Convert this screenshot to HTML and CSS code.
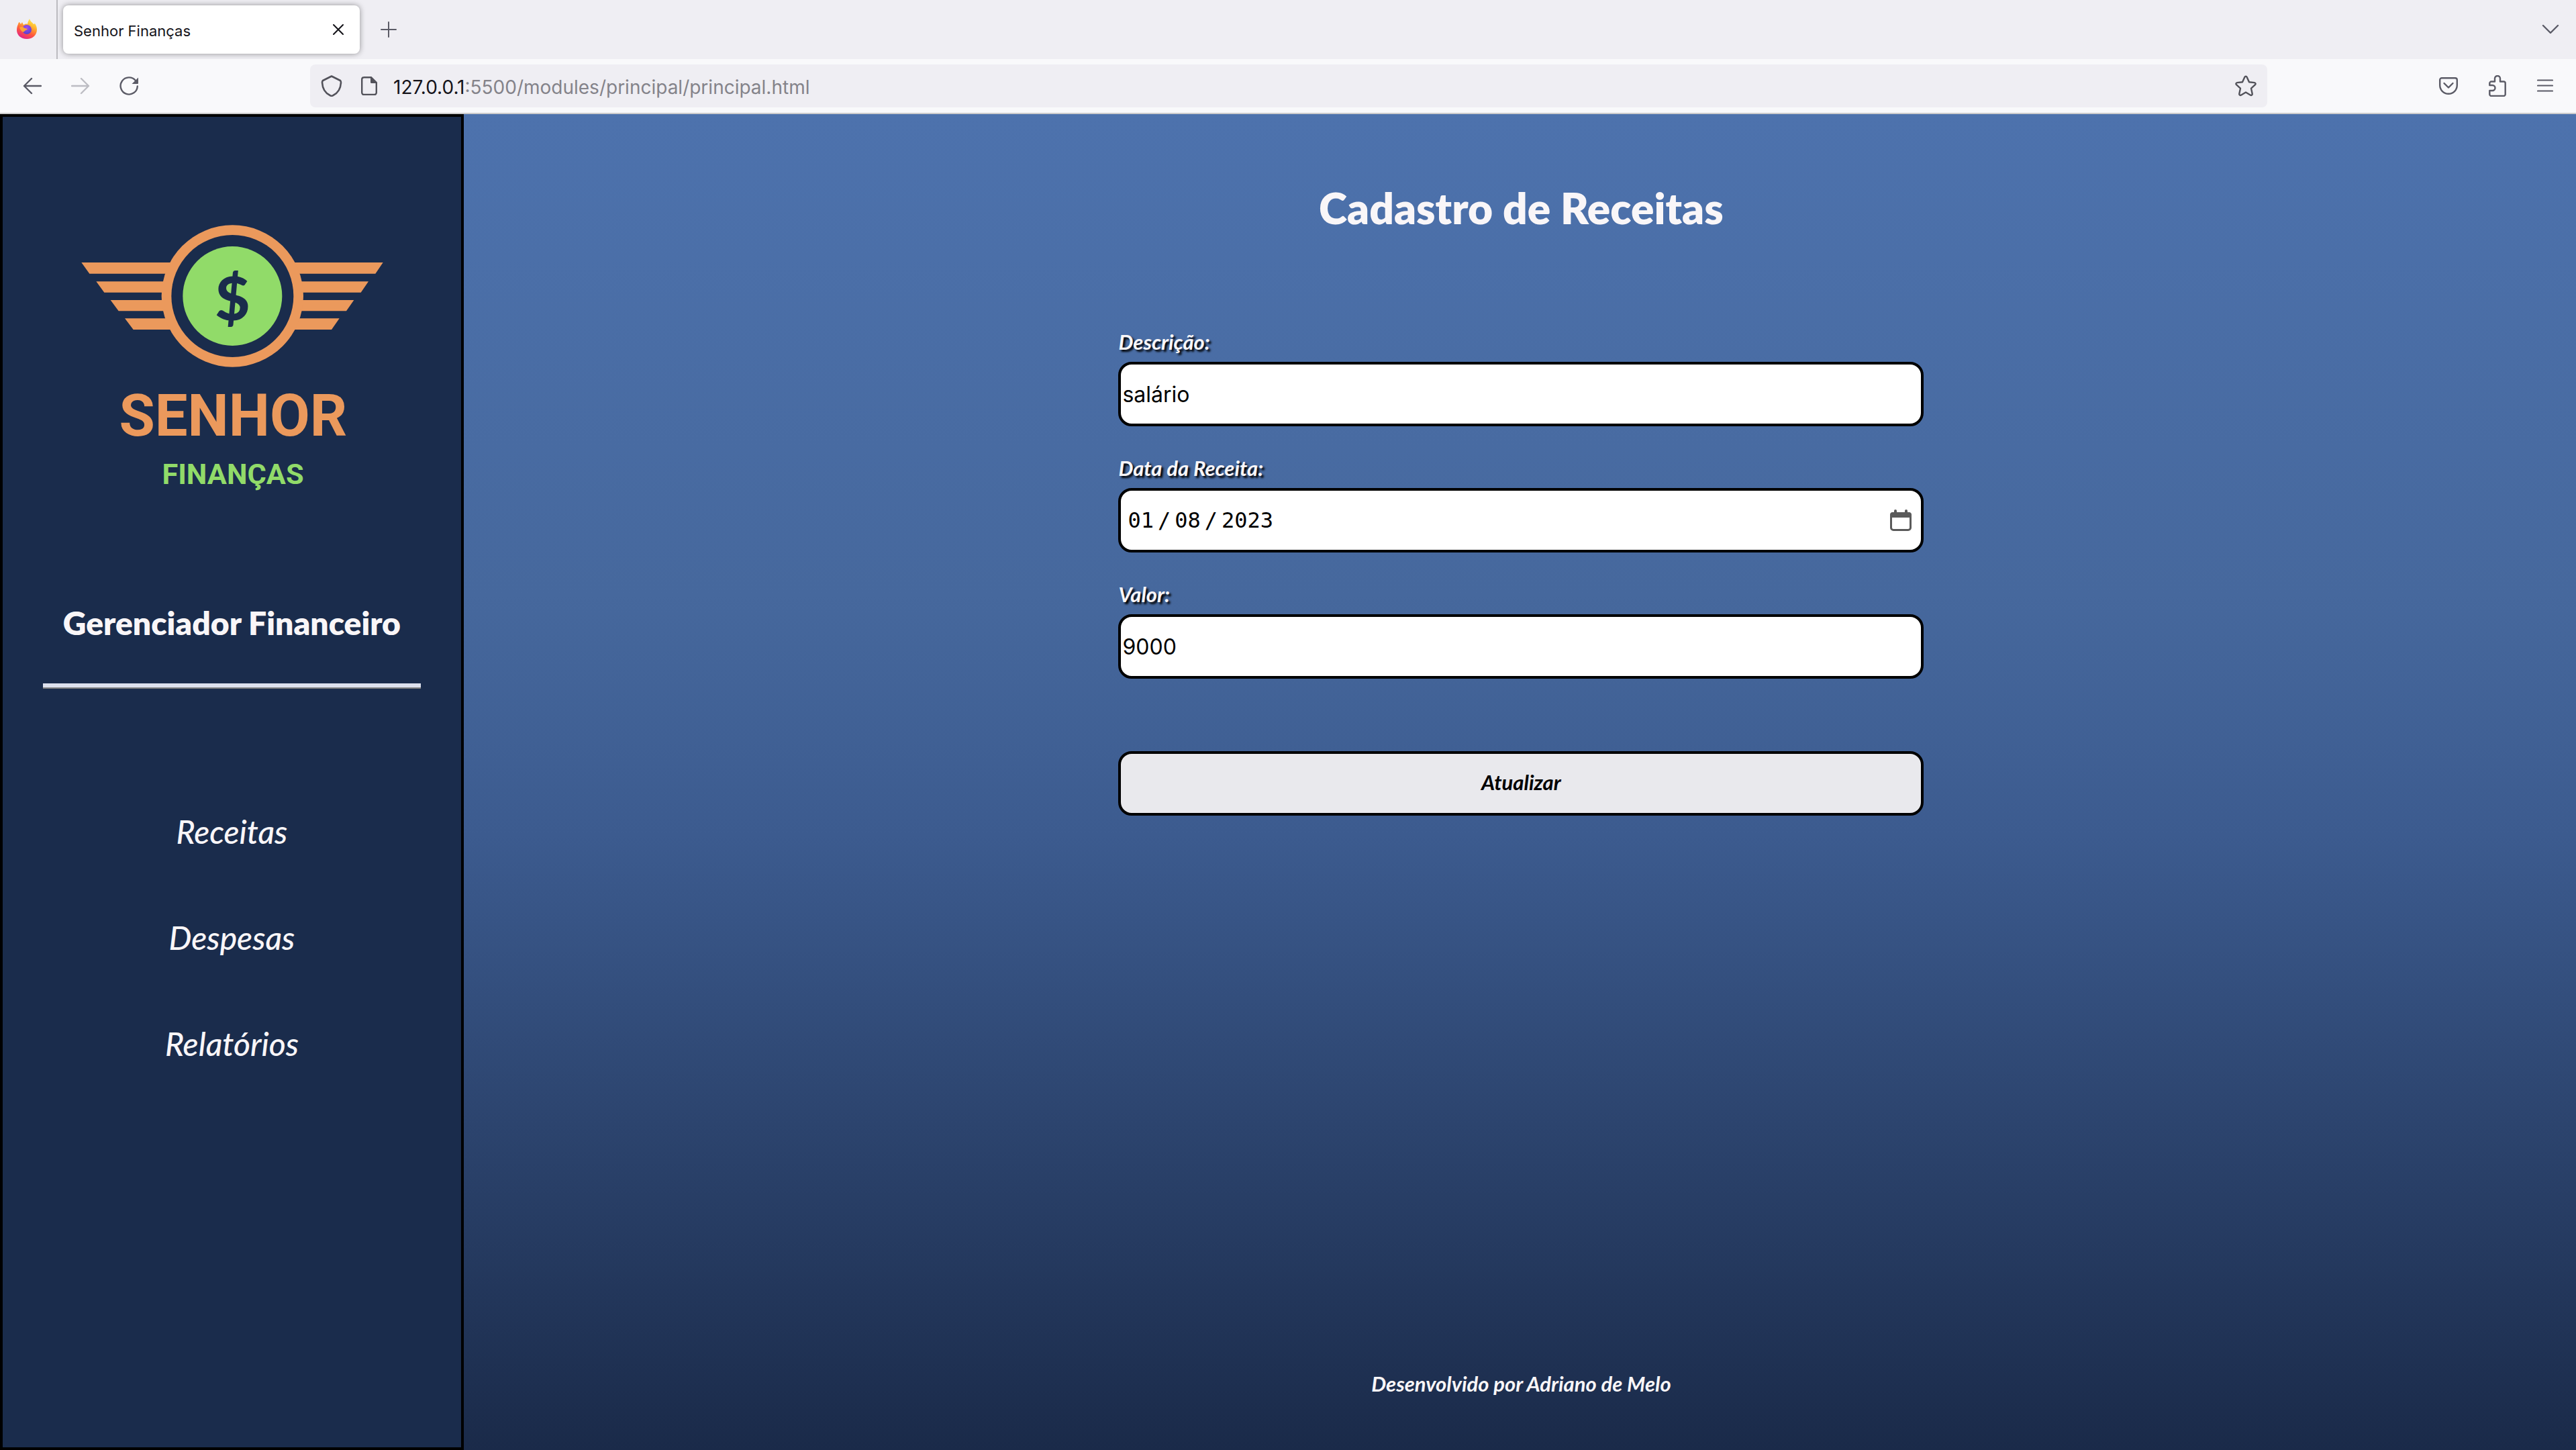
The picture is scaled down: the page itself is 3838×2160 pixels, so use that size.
FILE: index.html
```html
<!DOCTYPE html>
<html lang="pt-BR">
<head>
<meta charset="utf-8">
<meta name="viewport" content="width=device-width, initial-scale=1">
<title>Senhor Finanças</title>
<link rel="stylesheet" href="styles.css">
</head>
<body>
<header class="browser">
  <div class="tabs">
    <div class="tabs-home">
      <svg width="32" height="32" viewBox="0 0 32 32" aria-hidden="true">
        <defs>
          <linearGradient id="flame" x1="0.8" y1="0" x2="0.3" y2="1">
            <stop offset="0" stop-color="#fff44f"/><stop offset="0.35" stop-color="#ffb02e"/><stop offset="0.65" stop-color="#ff5a3c"/><stop offset="1" stop-color="#e0218a"/>
          </linearGradient>
          <radialGradient id="globe" cx="0.5" cy="0.3" r="0.8">
            <stop offset="0" stop-color="#a04bf0"/><stop offset="1" stop-color="#4a3fc8"/>
          </radialGradient>
        </defs>
        <path fill="url(#flame)" d="M3 8c0-1 1-3 2-3l2 3 2-3 2 4c2-1 4-2 6-1 0-3 2-6 3-8 1 4 4 5 6 8l2-1c2 3 3 6 3 9 0 8-6 14-15 14S1 24 1 17c0-4 1-7 2-9z"/>
        <circle cx="16" cy="16" r="7" fill="url(#globe)"/>
        <path fill="#ffa436" d="M5 13c3-2 6-1 8 1l4 1c-1 2-4 2-5 4-2 2-5-1-7-6z"/>
      </svg>
    </div>
    <div class="tab">
      <span>Senhor Finanças</span>
      <button class="icon-btn" type="button" aria-label="Fechar aba">
        <svg width="16" height="16" viewBox="0 0 16 16"><path d="M1 1l14 14M15 1L1 15" fill="none" stroke="#15141a" stroke-width="2" stroke-linecap="round"/></svg>
      </button>
    </div>
    <button class="icon-btn new-tab" type="button" aria-label="Nova aba">
      <svg width="24" height="24" viewBox="0 0 24 24"><path d="M12 1v22M1 12h22" fill="none" stroke="#5b5b66" stroke-width="2" stroke-linecap="round"/></svg>
    </button>
    <button class="icon-btn tab-list" type="button" aria-label="Listar abas">
      <svg width="26" height="16" viewBox="0 0 26 16"><path d="M2 2l11 11L24 2" fill="none" stroke="#5b5b66" stroke-width="2.4" stroke-linecap="round" stroke-linejoin="round"/></svg>
    </button>
  </div>
  <div class="toolbar">
    <div class="nav-buttons">
      <button class="icon-btn" type="button" aria-label="Voltar">
        <svg width="28" height="28" viewBox="0 0 28 28"><path d="M27 14H2M13 3L2 14l11 11" fill="none" stroke="#5b5b66" stroke-width="2.4" stroke-linecap="round" stroke-linejoin="round"/></svg>
      </button>
      <button class="icon-btn" type="button" aria-label="Avançar">
        <svg width="28" height="28" viewBox="0 0 28 28"><path d="M1 14h25M15 3l11 11-11 11" fill="none" stroke="#bdbdc3" stroke-width="2.4" stroke-linecap="round" stroke-linejoin="round"/></svg>
      </button>
      <button class="icon-btn" type="button" aria-label="Recarregar">
        <svg width="28" height="28" viewBox="0 0 28 28"><path d="M24 6A12.600 12.600 0 1 0 26.800 14.500" fill="none" stroke="#5b5b66" stroke-width="2.400" stroke-linecap="round"/><path d="M28 1.500V10a1 1 0 0 1-1 1h-8.500z" fill="#5b5b66"/></svg>
      </button>
    </div>
    <div class="address">
      <svg width="32" height="32" viewBox="0 0 32 32" aria-hidden="true"><path d="M16 1.500L29 8c1 1 1 2 1 3-.5 9-5 16-12 19.300q-2 1-4 0C7 27 2.500 20 2 11c0-1 0-2 1-3z" fill="none" stroke="#52525a" stroke-width="2.600" stroke-linejoin="round"/></svg>
      <svg width="24" height="28" viewBox="0 0 24 28" aria-hidden="true"><path d="M4 1.200h11L22.800 9v15a3 3 0 0 1-3 3H4.200a3 3 0 0 1-3-3V4a3 3 0 0 1 3-2.800z" fill="none" stroke="#52525a" stroke-width="2.400"/><path d="M14 1l9 9h-7.500a1.500 1.500 0 0 1-1.500-1.500z" fill="#52525a"/></svg>
      <p class="url"><strong>127.0.0.1</strong>:5500/modules/principal/principal.html</p>
      <button class="icon-btn" type="button" aria-label="Favoritar">
        <svg width="32" height="32" viewBox="0 0 32 32"><path d="M14.400 2.800a1.800 1.800 0 0 1 3.200 0l3.400 7.400 8 .9a1.800 1.800 0 0 1 1 3.100l-6 5.400 1.700 8.200a1.800 1.800 0 0 1-2.600 1.900L16 25.500l-7.100 4.200a1.800 1.800 0 0 1-2.600-1.900L8 19.600l-6-5.400a1.800 1.800 0 0 1 1-3.100l8-.9z" fill="none" stroke="#52525a" stroke-width="2.400" stroke-linejoin="round"/></svg>
      </button>
    </div>
    <div class="tools">
      <button class="icon-btn" type="button" aria-label="Pocket">
        <svg width="28" height="28" viewBox="0 0 28 28"><path d="M4 2.200h20a2.800 2.800 0 0 1 2.800 2.800v8a12.800 12.800 0 0 1-25.600 0V5A2.800 2.800 0 0 1 4 2.200zM7.500 10l6.500 6.500 6.500-6.500" fill="none" stroke="#5b5b66" stroke-width="2.400" stroke-linecap="round" stroke-linejoin="round"/></svg>
      </button>
      <button class="icon-btn" type="button" aria-label="Extensões">
        <svg width="26" height="32" viewBox="0 0 26 32"><path d="M1.300 15V12a2.500 2.500 0 0 1 2.500-2.500h5.200V5a4 4 0 0 1 8 0v4.500h5.200a2.500 2.500 0 0 1 2.500 2.500v16.500a2.500 2.500 0 0 1-2.500 2.500H3.800a2.500 2.500 0 0 1-2.500-2.500V23H5.500a4 4 0 0 0 0-8z" fill="none" stroke="#5b5b66" stroke-width="2.400" stroke-linejoin="round"/></svg>
      </button>
      <button class="icon-btn" type="button" aria-label="Menu">
        <svg width="24" height="24" viewBox="0 0 24 24"><path d="M1 3.500h22M1 11.500h22M1 19.500h22" fill="none" stroke="#5b5b66" stroke-width="2.200" stroke-linecap="round"/></svg>
      </button>
    </div>
  </div>
</header>
<div class="app">
  <aside class="sidebar">
    <svg class="logo" viewBox="-13 0 1500 1320" role="img" aria-label="Senhor Finanças">
      <g fill="#eb995c">
        <path d="M66 243H500V293H102zM132 328H500V377H168zM196 411H500V460H232zM260 493H500V543H298z"/>
        <path d="M1414 243H980V293H1380zM1349 328H980V377H1315zM1284 411H980V460H1250zM1219 493H980V543H1184z"/>
        <circle cx="741" cy="393" r="317"/>
      </g>
      <circle cx="741" cy="393" r="273" fill="#1a2c4c"/>
      <circle cx="741" cy="393" r="222" fill="#91db69"/>
      <text class="logo-coin" x="741" y="500">$</text>
      <text class="logo-name" x="744" y="1018">SENHOR</text>
      <text class="logo-sub" x="743" y="1232">FINANÇAS</text>
    </svg>
    <h2 class="sidebar-title">Gerenciador Financeiro</h2>
    <hr class="divider">
    <nav class="menu">
      <a href="#receitas">Receitas</a>
      <a href="#despesas">Despesas</a>
      <a href="#relatorios">Relatórios</a>
    </nav>
  </aside>
  <main class="content">
    <h1 class="page-title">Cadastro de Receitas</h1>
    <form class="form">
      <div class="field">
        <label for="descricao">Descrição:</label>
        <input class="control" id="descricao" type="text" value="salário">
      </div>
      <div class="field">
        <label for="data">Data da Receita:</label>
        <input class="control control-date" id="data" type="date" value="2023-01-08">
      </div>
      <div class="field">
        <label for="valor">Valor:</label>
        <input class="control" id="valor" type="text" inputmode="decimal" value="9000">
      </div>
      <button class="submit" type="submit">Atualizar</button>
    </form>
    <footer class="footer">Desenvolvido por Adriano de Melo</footer>
  </main>
</div>
</body>
</html>
```
FILE: styles.css
```css
* {
  box-sizing: border-box;
}

body {
  margin: 0;
  min-height: 100vh;
  display: flex;
  flex-direction: column;
  font-family: "Lato", sans-serif;
  color: #f9f6f8;
}

h1, h2, p {
  margin: 0;
}

svg {
  display: block;
  flex: none;
}

.icon-btn {
  padding: 0;
  border: 0;
  background: none;
}

/* Browser bars */
.browser {
  font-family: "Inter", sans-serif;
  background: #f9f9fb;
  border-bottom: 2px solid #cccccc;
}

.tabs {
  display: flex;
  align-items: center;
  height: 88px;
  background: #efeef3;
}

.tabs-home {
  display: flex;
  align-items: center;
  align-self: stretch;
  width: 86px;
  padding-left: 24px;
  border-right: 2px solid #bcbbc0;
}

.tab {
  display: flex;
  align-items: center;
  justify-content: space-between;
  width: 442px;
  height: 72px;
  margin-left: 8px;
  padding: 0 24px 0 16px;
  border-radius: 8px;
  background: #ffffff;
  box-shadow: 0 0 8px rgba(0, 0, 0, 0.4);
  color: #15141a;
  font-size: 22px;
}

.tab span,
.url {
  padding-top: 3px;
}

.new-tab {
  margin-left: 31px;
}

.tab-list {
  margin-left: auto;
  margin-right: 25px;
}

.toolbar {
  display: flex;
  align-items: center;
  height: 80px;
  padding: 0 34px;
}

.nav-buttons {
  display: flex;
  gap: 44px;
}

.address {
  display: flex;
  align-items: center;
  flex: 1;
  height: 64px;
  margin-left: 256px;
  padding: 0 16px;
  border-radius: 8px;
  background: #efeef3;
}

.address svg + svg {
  margin-left: 28px;
}

.url {
  flex: 1;
  margin-left: 24px;
  color: #84838a;
  font-size: 28px;
}

.url strong {
  color: #15141a;
  font-weight: 400;
}

.tools {
  display: flex;
  align-items: center;
  gap: 46px;
  margin-left: 256px;
}

/* Application */
.app {
  display: flex;
  flex: 1;
}

.sidebar {
  display: flex;
  flex-direction: column;
  align-items: center;
  flex: none;
  width: 18%;
  padding-top: 136px;
  border: 4px solid #000000;
  background: #1a2c4c;
}

.logo {
  width: 500px;
  max-width: 100%;
}

.logo-coin,
.logo-name,
.logo-sub {
  text-anchor: middle;
  font-weight: 700;
}

.logo-coin {
  fill: #1a2c4c;
  font-family: "Lato", sans-serif;
  font-size: 270px;
  font-weight: 900;
}

.logo-name,
.logo-sub {
  font-family: "Roboto", sans-serif;
}

.logo-name {
  fill: #eb995c;
  font-size: 260px;
}

.logo-sub {
  fill: #91db69;
  font-size: 130px;
}

.sidebar-title {
  margin-top: 149px;
  font-size: 48px;
  font-weight: 800;
  line-height: 58px;
}

.divider {
  width: 82.500%;
  height: 8px;
  margin: 61px 0 0;
  border: 0;
  border-bottom: 2px solid #7f7f7f;
  background: #dde1ee;
}

.menu {
  display: flex;
  flex-direction: column;
  align-items: center;
  gap: 106px;
  margin-top: 187px;
}

.menu a {
  color: inherit;
  font-size: 48px;
  font-style: italic;
  font-weight: 500;
  line-height: 52px;
  text-decoration: none;
}

.content {
  display: flex;
  flex: 1;
  flex-direction: column;
  align-items: center;
  padding: 102px 0 81px 4px;
  background: linear-gradient(#4d72ad, #46689d 36%, #3c5b8f 54%, #1a2a49);
}

.page-title {
  font-size: 64px;
  font-weight: 800;
  line-height: 76px;
}

.form {
  display: flex;
  flex-direction: column;
  gap: 44px;
  width: 1200px;
  max-width: 100%;
  margin-top: 143px;
}

.field {
  display: flex;
  flex-direction: column;
  gap: 12px;
}

.field label,
.submit,
.footer {
  font-family: "Lato", sans-serif;
  font-size: 31px;
  font-style: italic;
  font-weight: 700;
  line-height: 36px;
}

.field label {
  text-shadow: 3px 3px 3px #000000;
}

.control,
.submit {
  width: 100%;
  height: 96px;
  border: 4px solid #000000;
  border-radius: 20px;
}

.control {
  padding: 0 2px;
  background: #ffffff;
  color: #000000;
  font-family: "Inter", sans-serif;
  font-size: 32px;
}

.control-date {
  padding: 0 14px 0 10px;
  font-family: "DejaVu Sans Mono", monospace;
}

.control-date::-webkit-datetime-edit-fields-wrapper,
.control-date::-webkit-datetime-edit-month-field,
.control-date::-webkit-datetime-edit-day-field,
.control-date::-webkit-datetime-edit-year-field {
  padding: 0;
}

.control-date::-webkit-datetime-edit-text {
  padding: 0 6px;
}

.control-date::-webkit-calendar-picker-indicator {
  width: 32px;
  height: 32px;
  padding: 0;
  background: url("data:image/svg+xml,%3Csvg xmlns='http://www.w3.org/2000/svg' viewBox='0 0 32 32'%3E%3Cpath d='M5 5.500h22a3.500 3.500 0 0 1 3.500 3.500v18a3.500 3.500 0 0 1-3.500 3.500H5A3.500 3.500 0 0 1 1.500 27V9A3.500 3.500 0 0 1 5 5.500z' fill='none' stroke='%235a5a5a' stroke-width='3'/%3E%3Cpath d='M0 12V8a4 4 0 0 1 4-4h2V2a2 2 0 0 1 4 0v2h12V2a2 2 0 0 1 4 0v2h2a4 4 0 0 1 4 4v4z' fill='%235a5a5a'/%3E%3C/svg%3E") center / contain no-repeat;
}

.submit {
  margin-top: 64px;
  padding: 0 0 4px;
  background: #e9e9ed;
  color: #000000;
}

.footer {
  margin-top: auto;
}
```
